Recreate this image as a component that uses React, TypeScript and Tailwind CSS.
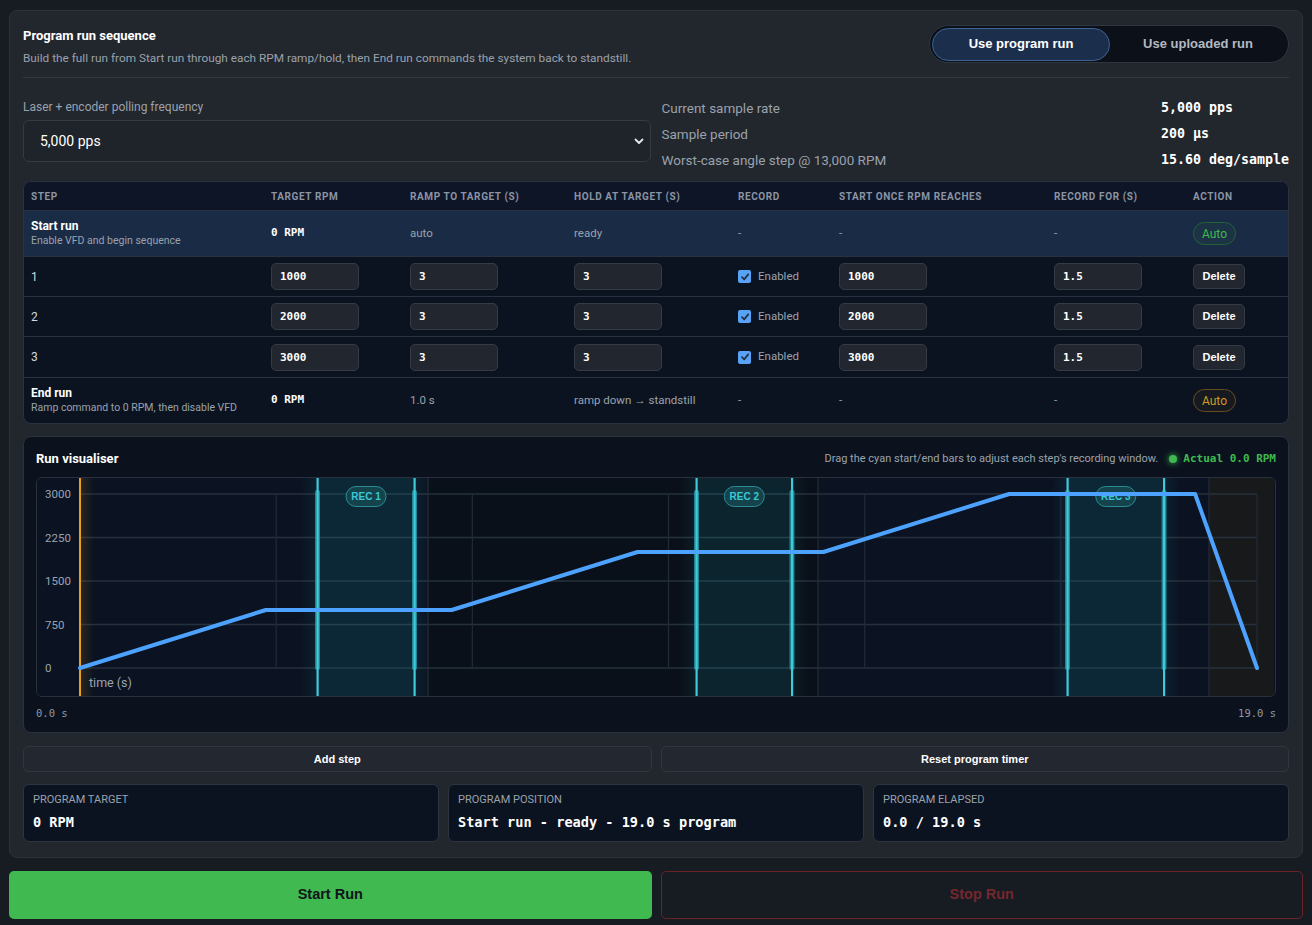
import React from "react";

const SANS = "font-['Roboto','Noto_Sans',sans-serif]";
const BTN = "font-['Liberation_Sans',Arial,sans-serif]";
const MONO = "font-['DejaVu_Sans_Mono',monospace]";

const COLS =
  "grid grid-cols-[240px_139px_164px_164px_101px_215px_139px_1fr] items-center";

function Field({ value }: { value: string }) {
  return (
    <input
      readOnly
      value={value}
      className={`h-[27px] w-[88px] rounded-[5px] border border-[#353b45] bg-[#22262e] pl-[8px] text-[11px] font-bold text-white outline-none ${MONO}`}
    />
  );
}

function Check() {
  return (
    <span className="flex h-[13px] w-[13px] items-center justify-center rounded-[2px] bg-[#58a3f7]">
      <svg width="10" height="10" viewBox="0 0 10 10">
        <path d="M2 5.2 L4.2 7.4 L8.2 2.4" fill="none" stroke="#263244" strokeWidth="1.8" strokeLinecap="round" strokeLinejoin="round" />
      </svg>
    </span>
  );
}

function Chart() {
  const W = 1237;
  const H = 218;
  const X0 = 43;
  const X1 = 1220;
  const Y0 = 190;
  const YT = 16;
  const tx = (t: number) => X0 + (t * (X1 - X0)) / 19;
  const ry = (r: number) => Y0 - (r * (Y0 - YT)) / 3000;
  const pts: [number, number][] = [
    [0, 0],
    [3, 1000],
    [6, 1000],
    [9, 2000],
    [12, 2000],
    [15, 3000],
    [18, 3000],
    [19, 0],
  ];
  const line = pts.map(([t, r]) => `${tx(t).toFixed(1)},${ry(r).toFixed(1)}`).join(" ");
  const hLines = [0, 750, 1500, 2250, 3000];
  const vLines = [0, 1, 2, 3, 4, 5, 6].map((k) => X0 + (k * (X1 - X0)) / 6);
  const recs = [
    { a: 280.5, b: 377.5, label: "REC 1" },
    { a: 659.5, b: 755, label: "REC 2" },
    { a: 1030.5, b: 1127, label: "REC 3" },
  ];
  return (
    <div className="h-[220px] overflow-hidden rounded-md border border-[#29313c] bg-[#0b1322]">
      <svg width={W} height={H} viewBox={`0 0 ${W} ${H}`} className="block">
        <defs>
          <linearGradient id="glowL" x1="0" x2="1" y1="0" y2="0">
            <stop offset="0" stopColor="#22d3ee" stopOpacity="0" />
            <stop offset="1" stopColor="#22d3ee" stopOpacity="0.07" />
          </linearGradient>
          <linearGradient id="glowR" x1="0" x2="1" y1="0" y2="0">
            <stop offset="0" stopColor="#22d3ee" stopOpacity="0.07" />
            <stop offset="1" stopColor="#22d3ee" stopOpacity="0" />
          </linearGradient>
          <linearGradient id="glowO" x1="0" x2="1" y1="0" y2="0">
            <stop offset="0" stopColor="#f59e0b" stopOpacity="0.14" />
            <stop offset="1" stopColor="#f59e0b" stopOpacity="0" />
          </linearGradient>
        </defs>
        {/* bands */}
        <rect x="0" y="0" width="391" height={H} fill="#0b1322" />
        <rect x="391" y="0" width="390" height={H} fill="#0a1019" />
        <rect x="781" y="0" width="391" height={H} fill="#0b1322" />
        <rect x="1172" y="0" width={W - 1172} height={H} fill="#18191b" />
        {/* grid */}
        {hLines.map((r) => (
          <line key={r} x1={X0} x2={X1} y1={ry(r)} y2={ry(r)} stroke="#26303c" strokeWidth="1.3" />
        ))}
        {vLines.map((x, i) => (
          <line key={i} x1={x} x2={x} y1={YT} y2={Y0} stroke="#222b36" strokeWidth="1.2" />
        ))}
        {[391, 781, 1172].map((x) => (
          <line key={x} x1={x} x2={x} y1="0" y2={H} stroke="#242c37" strokeWidth="1.2" />
        ))}
        {/* y labels */}
        {hLines.map((r) => (
          <text
            key={"t" + r}
            x="8"
            y={ry(r) + 4}
            fontSize="11.5"
            fill="#9aa4b1"
            fontFamily="Roboto, 'Noto Sans', sans-serif"
          >
            {r}
          </text>
        ))}
        <text x="52" y="209" fontSize="12.5" fill="#9aa4b1" fontFamily="Roboto, 'Noto Sans', sans-serif">
          time (s)
        </text>
        {/* rec windows */}
        {recs.map((w) => {
          const mid = (w.a + w.b) / 2;
          return (
            <g key={w.label}>
              <rect x={w.a - 16} y="0" width="16" height={H} fill="url(#glowL)" />
              <rect x={w.b} y="0" width="16" height={H} fill="url(#glowR)" />
              <rect x={w.a} y="0" width={w.b - w.a} height={H} fill="#22d3ee" fillOpacity="0.1" />
              <rect x={w.a - 2.5} y={YT - 4} width="5" height={Y0 - YT + 6} rx="2" fill="#2aa3b0" fillOpacity="0.75" />
              <rect x={w.b - 2.5} y={YT - 4} width="5" height={Y0 - YT + 6} rx="2" fill="#2aa3b0" fillOpacity="0.75" />
              <rect x={w.a - 1} y="0" width="2.2" height={H} fill="#40c9d8" />
              <rect x={w.b - 1} y="0" width="2.2" height={H} fill="#40c9d8" />
              <rect x={mid - 20} y="8.5" width="40" height="20" rx="10" fill="#14434c" stroke="#2b8c96" strokeWidth="1" />
              <text
                x={mid}
                y="22"
                textAnchor="middle"
                fontSize="10"
                fontWeight="700"
                fill="#3cc8d8"
                fontFamily="'Liberation Sans', Arial, sans-serif"
              >
                {w.label}
              </text>
            </g>
          );
        })}
        {/* playhead */}
        <rect x={X0} y="0" width="14" height={H} fill="url(#glowO)" />
        <rect x={X0 - 1} y="0" width="2" height={H} fill="#e6a01e" />
        {/* line */}
        <polyline points={line} fill="none" stroke="#4da2ff" strokeWidth="4" strokeLinejoin="round" strokeLinecap="round" />
      </svg>
    </div>
  );
}

export default function App() {
  const steps = [
    { n: "1", rpm: "1000", h: "h-[40px]" },
    { n: "2", rpm: "2000", h: "h-[40px]" },
    { n: "3", rpm: "3000", h: "h-[41px]" },
  ];
  return (
    <div className={`min-h-screen bg-[#171b22] px-[9px] pt-[10px] pb-[6px] ${SANS}`}>
      <div className="rounded-lg border border-[#2e333b] bg-[#22262d] px-[13px] pt-[16px] pb-[15px]">
        {/* header */}
        <div className="flex items-start justify-between">
          <div>
            <div className="text-[13px] font-bold leading-[18px] text-white">Program run sequence</div>
            <div className="mt-[5px] text-[11.8px] leading-[16px] text-[#9aa2ac]">
              Build the full run from Start run through each RPM ramp/hold, then End run commands the system back to standstill.
            </div>
          </div>
          <div className={`-mt-[2px] flex h-[38px] items-center rounded-full border border-[#2f3640] bg-[#0c1119] p-[2px] ${BTN}`}>
            <div className="flex h-[33px] w-[178px] items-center justify-center rounded-full border border-[#3c6595] bg-[#1b2e4c] text-[13px] font-bold text-white">
              Use program run
            </div>
            <div className="flex h-[33px] w-[176px] items-center justify-center text-[13px] font-bold text-[#b3b9c2]">
              Use uploaded run
            </div>
          </div>
        </div>

        <div className="mt-[11px] border-t border-[#343a44]" />

        {/* settings */}
        <div className="mt-[17px] grid grid-cols-2 items-start gap-[11px]">
          <div className="mt-[4px]">
            <div className="text-[12px] leading-[16px] text-[#9aa2ac]">Laser + encoder polling frequency</div>
            <div className="mt-[5px] flex h-[42px] items-center justify-between rounded-[6px] border border-[#353a43] bg-[#1f232a] pl-[16px] pr-[6px]">
              <span className="text-[14px] text-white">5,000 pps</span>
              <svg width="10" height="7" viewBox="0 0 10 7">
                <path d="M1.5 1.5 L5 5 L8.5 1.5" fill="none" stroke="#e5e7eb" strokeWidth="1.8" strokeLinecap="round" strokeLinejoin="round" />
              </svg>
            </div>
          </div>
          <div className="grid grid-cols-[1fr_auto] text-[13.5px] leading-[26px]">
            <div className="text-[#9aa2ac]">Current sample rate</div>
            <div className={`text-[13.3px] font-bold text-white ${MONO}`}>5,000 pps</div>
            <div className="text-[#9aa2ac]">Sample period</div>
            <div className={`text-[13.3px] font-bold text-white ${MONO}`}>200 µs</div>
            <div className="text-[#9aa2ac]">Worst-case angle step @ 13,000 RPM</div>
            <div className={`text-[13.3px] font-bold text-white ${MONO}`}>15.60 deg/sample</div>
          </div>
        </div>

        {/* table */}
        <div className="mt-[8px] overflow-hidden rounded-lg border border-[#2b3240] bg-[#0c1320]">
          <div className={`${COLS} h-[29px] border-b border-[#2a3140] bg-[#0e1526] text-[10px] font-bold tracking-[0.6px] text-[#8a94a3]`}>
            {["STEP", "TARGET RPM", "RAMP TO TARGET (S)", "HOLD AT TARGET (S)", "RECORD", "START ONCE RPM REACHES", "RECORD FOR (S)", "ACTION"].map((h) => (
              <div key={h} className="pl-[7px]">
                {h}
              </div>
            ))}
          </div>
          {/* start row */}
          <div className={`${COLS} h-[46px] border-b border-[#2a3140] bg-[#1a2b46] text-[11.5px] text-[#9aa2ac]`}>
            <div className="pl-[7px]">
              <div className="text-[12px] font-bold leading-[15px] text-white">Start run</div>
              <div className="text-[10.5px] leading-[14px] text-[#9aa2ac]">Enable VFD and begin sequence</div>
            </div>
            <div className={`pl-[7px] text-[11px] font-bold text-white ${MONO}`}>0 RPM</div>
            <div className="pl-[7px]">auto</div>
            <div className="pl-[7px]">ready</div>
            <div className="pl-[7px]">-</div>
            <div className="pl-[7px]">-</div>
            <div className="pl-[7px]">-</div>
            <div className="pl-[7px]">
              <span className="inline-flex h-[23px] w-[43px] items-center justify-center rounded-full border border-[#1f6436] bg-[#3fb950]/[0.06] text-[12px] text-[#3fb950]">
                Auto
              </span>
            </div>
          </div>
          {steps.map((s) => (
            <div key={s.n} className={`${COLS} ${s.h} border-b border-[#2a3140] text-[12px] text-[#d3d8df]`}>
              <div className="pl-[7px]">{s.n}</div>
              <div className="pl-[7px]">
                <Field value={s.rpm} />
              </div>
              <div className="pl-[7px]">
                <Field value="3" />
              </div>
              <div className="pl-[7px]">
                <Field value="3" />
              </div>
              <div className="flex items-center gap-[7px] pl-[7px] text-[11.5px] text-[#9aa2ac]">
                <Check />
                <span>Enabled</span>
              </div>
              <div className="pl-[7px]">
                <Field value={s.rpm} />
              </div>
              <div className="pl-[7px]">
                <Field value="1.5" />
              </div>
              <div className="pl-[7px]">
                <span className={`inline-flex h-[25px] w-[52px] items-center justify-center rounded-[5px] border border-[#353b45] bg-[#22262e] text-[11px] font-bold text-white ${BTN}`}>
                  Delete
                </span>
              </div>
            </div>
          ))}
          {/* end row */}
          <div className={`${COLS} h-[45px] text-[11.5px] text-[#9aa2ac]`}>
            <div className="pl-[7px]">
              <div className="text-[12px] font-bold leading-[15px] text-white">End run</div>
              <div className="text-[10.5px] leading-[14px] text-[#9aa2ac]">Ramp command to 0 RPM, then disable VFD</div>
            </div>
            <div className={`pl-[7px] text-[11px] font-bold text-white ${MONO}`}>0 RPM</div>
            <div className="pl-[7px]">1.0 s</div>
            <div className="pl-[7px]">ramp down → standstill</div>
            <div className="pl-[7px]">-</div>
            <div className="pl-[7px]">-</div>
            <div className="pl-[7px]">-</div>
            <div className="pl-[7px]">
              <span className="inline-flex h-[23px] w-[43px] items-center justify-center rounded-full border border-[#6b4d1c] bg-[#d29922]/[0.05] text-[12px] text-[#d29922]">
                Auto
              </span>
            </div>
          </div>
        </div>

        {/* visualiser */}
        <div className="mt-[12px] rounded-lg border border-[#2c323c] bg-[#0b121e] px-[12px] pt-[13px] pb-[12px]">
          <div className="flex h-[18px] items-center justify-between">
            <div className="text-[13px] font-bold text-white">Run visualiser</div>
            <div className="flex items-center">
              <span className="text-[11px] text-[#9ba3ad]">
                Drag the cyan start/end bars to adjust each step's recording window.
              </span>
              <span className="ml-[11px] h-[8px] w-[8px] rounded-full bg-[#3fb950] shadow-[0_0_6px_#3fb950]" />
              <span className={`ml-[6px] text-[11px] font-bold text-[#3fb950] ${MONO}`}>Actual 0.0 RPM</span>
            </div>
          </div>
          <div className="mt-[9px]">
            <Chart />
          </div>
          <div className={`mt-[9px] flex justify-between text-[10.5px] leading-[14px] text-[#8f98a4] ${MONO}`}>
            <span>0.0 s</span>
            <span>19.0 s</span>
          </div>
        </div>

        {/* buttons */}
        <div className={`mt-[13px] grid grid-cols-2 gap-[9px] ${BTN}`}>
          <div className="flex h-[26px] items-center justify-center rounded-[5px] border border-[#30363f] bg-[#23272f] text-[11px] font-bold text-white">
            Add step
          </div>
          <div className="flex h-[26px] items-center justify-center rounded-[5px] border border-[#30363f] bg-[#23272f] text-[11px] font-bold text-white">
            Reset program timer
          </div>
        </div>

        {/* stats */}
        <div className="mt-[12px] grid grid-cols-3 gap-[9px]">
          {[
            ["PROGRAM TARGET", "0 RPM"],
            ["PROGRAM POSITION", "Start run - ready - 19.0 s program"],
            ["PROGRAM ELAPSED", "0.0 / 19.0 s"],
          ].map(([l, v]) => (
            <div key={l} className="h-[58px] rounded-[6px] border border-[#2f3540] bg-[#0c1320] px-[9px] pt-[8px]">
              <div className="text-[11px] leading-[14px] text-[#9aa2ac]">{l}</div>
              <div className={`mt-[6px] text-[13.6px] font-bold leading-[18px] text-white ${MONO}`}>{v}</div>
            </div>
          ))}
        </div>
      </div>

      {/* run buttons */}
      <div className={`mt-[13px] grid grid-cols-2 gap-[9px] ${BTN}`}>
        <div className="flex h-[48px] items-center justify-center rounded-[5px] bg-[#3fb950] text-[14.5px] font-bold text-[#111418]">
          Start Run
        </div>
        <div className="flex h-[48px] items-center justify-center rounded-[5px] border border-[#6a2228] text-[14.5px] font-bold text-[#74282d]">
          Stop Run
        </div>
      </div>
    </div>
  );
}
